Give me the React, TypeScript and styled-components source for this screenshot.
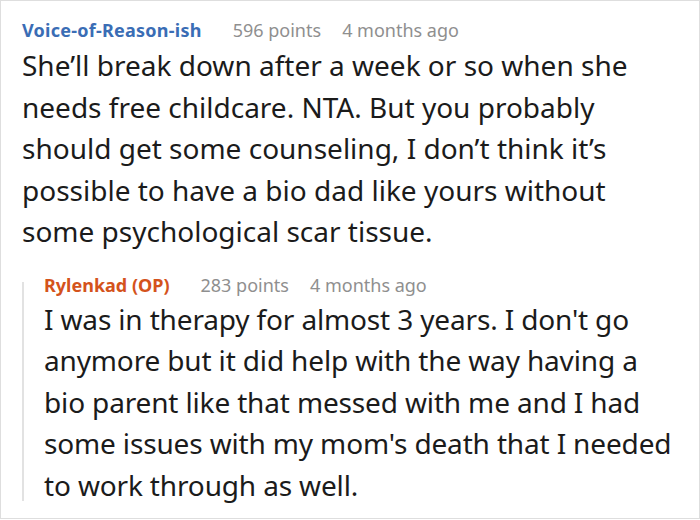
import React from "react";
import styled, { createGlobalStyle } from "styled-components";

const Global = createGlobalStyle`
  html, body { margin: 0; padding: 0; background: #ffffff; }
  body { font-family: "Noto Sans", "Open Sans", sans-serif; }
`;

const Card = styled.div`
  box-sizing: border-box;
  width: 700px;
  height: 519px;
  border: 1px solid #dedede;
  background: #fff;
  padding: 17px 21px 0 21px;
  display: flex;
  flex-direction: column;
`;

const Comment = styled.div`
  display: flex;
  flex-direction: column;
  gap: 3px;
`;

const Header = styled.div`
  display: flex;
  align-items: baseline;
  font-size: 18px;
  line-height: 24px;
`;

const Author = styled.span<{ $op?: boolean }>`
  font-weight: 700;
  color: ${(p) => (p.$op ? "#d4531c" : "#3a6db5")};
  margin-right: 31px;
  letter-spacing: ${(p) => (p.$op ? "0" : "0.25px")};
`;

const Meta = styled.span`
  color: #8f8f8f;
  margin-right: 21px;
`;

const Body = styled.p<{ $width: number; $tight?: boolean }>`
  margin: 0;
  font-size: 28px;
  line-height: 41.5px;
  color: #1b1b1b;
  max-width: ${(p) => p.$width}px;
  letter-spacing: ${(p) => (p.$tight ? "-0.15px" : "0")};
`;

const Line = styled.span`
  display: block;
  white-space: nowrap;
`;

const Reply = styled.div`
  display: flex;
  margin-top: 20px;
`;

const Thread = styled.div`
  width: 2px;
  flex: none;
  background: #e2e2e2;
  margin: 9px 0 5px 0;
`;

const ReplyContent = styled.div`
  display: flex;
  flex-direction: column;
  gap: 2px;
  padding-left: 20px;
`;

type Data = { author: string; op?: boolean; points: string; time: string };

const CommentHeader = ({ c }: { c: Data }) => (
  <Header>
    <Author $op={c.op}>{c.author}</Author>
    <Meta>{c.points}</Meta>
    <Meta>{c.time}</Meta>
  </Header>
);

const main: Data = {
  author: "Voice-of-Reason-ish",
  points: "596 points",
  time: "4 months ago",
};

const mainText =
  "She\u2019ll break down after a week or so when she needs free childcare. NTA. But you probably should get some counseling, I don\u2019t think it\u2019s possible to have a bio dad like yours without some psychological scar tissue.";

const reply: Data = {
  author: "Rylenkad (OP)",
  op: true,
  points: "283 points",
  time: "4 months ago",
};

const replyLines = [
  "I was in therapy for almost 3 years. I don't go",
  "anymore but it did help with the way having a",
  "bio parent like that messed with me and I had",
  "some issues with my mom's death that I needed",
  "to work through as well.",
];

export default function App() {
  return (
    <>
      <Global />
      <Card>
        <Comment>
          <CommentHeader c={main} />
          <Body $width={640}>{mainText}</Body>
        </Comment>
        <Reply>
          <Thread />
          <ReplyContent>
            <CommentHeader c={reply} />
            <Body $width={660} $tight>
              {replyLines.map((l, i) => (
                <Line key={i}>{l}</Line>
              ))}
            </Body>
          </ReplyContent>
        </Reply>
      </Card>
    </>
  );
}
